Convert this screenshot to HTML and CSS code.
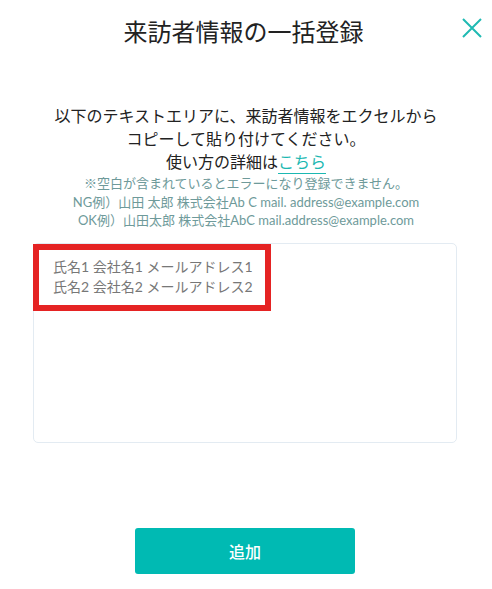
FILE: index.html
```html
<!DOCTYPE html>
<html lang="ja">
<head>
  <meta charset="UTF-8">
  <meta name="viewport" content="width=device-width, initial-scale=1.0">
  <title>来訪者情報の一括登録</title>
  <link rel="stylesheet" href="styles.css">
</head>
<body>
  <div class="modal">
    <header class="modal-head">
      <span></span>
      <h1 class="title">来訪者情報の一括登録</h1>
      <a href="#" class="close" aria-label="閉じる">
        <svg width="22" height="22" viewBox="0 0 22 22">
          <path d="M2 2 L20 20 M20 2 L2 20" stroke="#1fbab3" stroke-width="2" fill="none"/>
        </svg>
      </a>
    </header>

    <div class="intro">
      <p>以下のテキストエリアに、来訪者情報をエクセルから<br>コピーして貼り付けてください。<br>使い方の詳細は<a href="#" class="link">こちら</a></p>
    </div>
    <div class="notes">
      <p>※空白が含まれているとエラーになり登録できません。</p>
      <p>NG例）山田 太郎 株式会社Ab C mail. address@example.com</p>
      <p>OK例）山田太郎 株式会社AbC mail.address@example.com</p>
    </div>

    <div class="field">
      <textarea class="paste" placeholder="氏名1 会社名1 メールアドレス1&#10;氏名2 会社名2 メールアドレス2"></textarea>
      <div class="mark"></div>
    </div>

    <div class="actions">
      <button class="btn">追加</button>
    </div>
  </div>
</body>
</html>
```

FILE: styles.css
```css
* {
  margin: 0;
  padding: 0;
  box-sizing: border-box;
}
body {
  background: #fff;
  font-family: "Lato", "Noto Sans CJK JP", sans-serif;
  color: #222;
}
.modal {
  width: 492px;
  height: 589px;
  padding: 0 34px;
}
.modal-head {
  display: grid;
  grid-template-columns: 1fr auto 1fr;
  align-items: start;
  margin: 0 -34px;
  padding: 13px 9px 0 0;
}
.title {
  font-family: "Noto Sans CJK JP", sans-serif;
  font-size: 24px;
  font-weight: 400;
  line-height: 36px;
  color: #222;
  margin-left: 4px;
}
.close {
  justify-self: end;
  display: block;
  width: 22px;
  height: 22px;
  margin-top: 4px;
}
.close svg {
  display: block;
}
.intro {
  margin-top: 55px;
  text-align: center;
  font-family: "Noto Sans CJK JP", sans-serif;
  font-size: 16px;
  line-height: 23px;
  color: #222;
}
.link {
  color: #1bb8b2;
  text-decoration: none;
  border-bottom: 1px solid #1bb8b2;
}
.notes {
  margin-top: 1px;
  text-align: center;
  font-size: 13px;
  line-height: 18.5px;
  color: #6e9a9a;
}
.field {
  position: relative;
  margin-top: 13px;
  margin-left: -1px;
}
.paste {
  display: block;
  width: 424px;
  height: 200px;
  border: 1px solid #e3ebf2;
  border-radius: 5px;
  padding: 13px 19px;
  font-family: "Lato", "Noto Sans CJK JP", sans-serif;
  font-size: 14px;
  line-height: 20px;
  color: #333;
  resize: none;
  outline: none;
}
.paste::placeholder {
  color: #777;
}
.mark {
  position: absolute;
  top: 1px;
  left: 0;
  width: 238px;
  height: 67px;
  border: 6px solid #e52323;
  pointer-events: none;
}
.actions {
  display: flex;
  justify-content: center;
  margin-top: 85px;
  margin-left: -2px;
}
.btn {
  width: 220px;
  height: 46px;
  border: none;
  border-radius: 3px;
  background: #00bab3;
  color: #fff;
  font-family: "Noto Sans CJK JP", sans-serif;
  font-size: 16px;
  font-weight: 500;
}
```
